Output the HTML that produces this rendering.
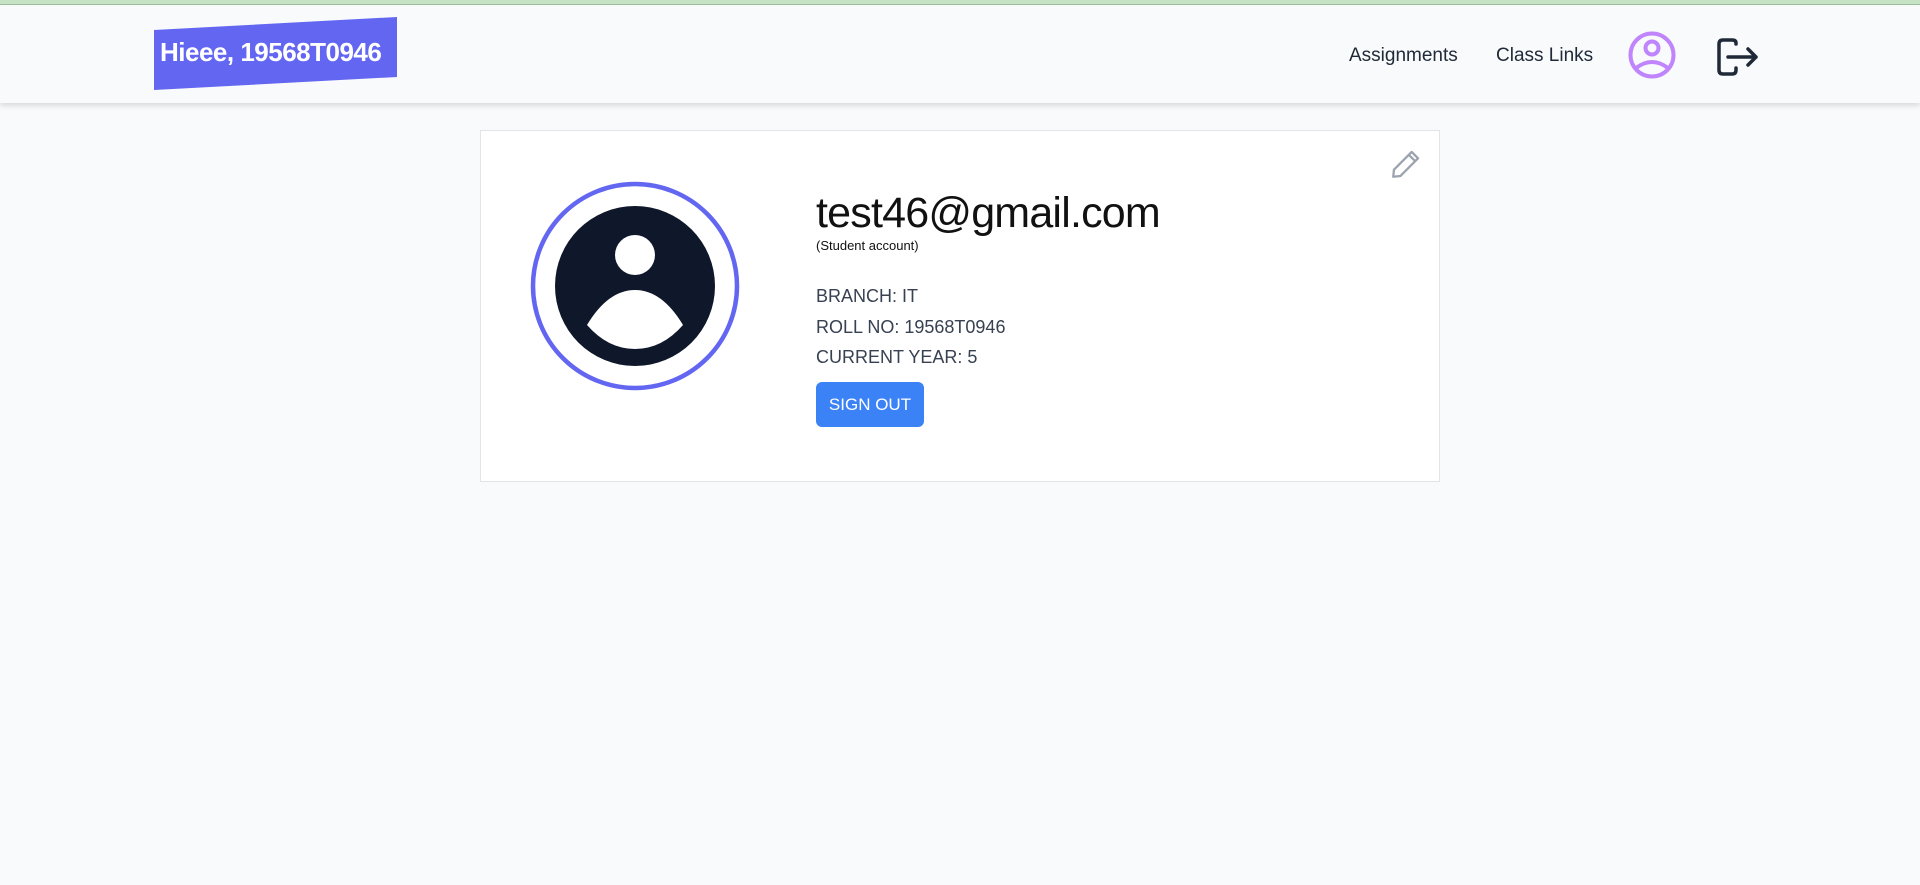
<!DOCTYPE html>
<html><head><meta charset="utf-8"><style>
*{box-sizing:border-box;margin:0;padding:0}
body{width:1920px;height:885px;background:#f8fafc;font-family:"Liberation Sans",sans-serif;position:relative;overflow:hidden;color:#1f2937}
.top{position:absolute;left:0;top:0;width:1920px;height:5px;background:#c6e3c6;border-bottom:1px solid #9cbf9c}
.hdr{position:absolute;left:0;top:5px;width:1920px;height:98px;background:#f8fafc;box-shadow:0 3px 5px rgba(0,0,0,.12)}
.logo{position:absolute;left:154px;top:12px;width:243px;height:73px;background:#6366f1;clip-path:polygon(0 13px,100% 0,100% 60px,0 73px)}
.logo span{position:absolute;left:6px;top:20px;color:#fff;font-weight:bold;font-size:26px;letter-spacing:-0.5px}
.nav{position:absolute;font-size:19px;color:#1f2937}
.card{position:absolute;left:480px;top:130px;width:960px;height:352px;background:#fff;border:1px solid #e2e4e8}
.t{position:absolute;left:335px;white-space:nowrap}
</style></head><body>
<div class="top"></div>
<div class="hdr">
<div class="logo"><span>Hieee, 19568T0946</span></div>
<div class="nav" style="left:1349px;top:40px">Assignments</div>
<div class="nav" style="left:1496px;top:40px">Class Links</div>
<svg style="position:absolute;left:1627px;top:25px" width="50" height="50" viewBox="0 0 50 50"><circle cx="25" cy="25" r="21.5" fill="none" stroke="#c084fc" stroke-width="4"/><circle cx="25" cy="18" r="6.5" fill="none" stroke="#c084fc" stroke-width="4"/><path d="M9 38 Q25 26 41 38" fill="none" stroke="#c084fc" stroke-width="4"/></svg>
<svg style="position:absolute;left:1716px;top:33px" width="44" height="40" viewBox="0 0 44 40"><path d="M20 6 V5 Q20 2 16 2 H7 Q3 2 3 6 V32 Q3 36 7 36 H16 Q20 36 20 32 V30" fill="none" stroke="#1f2937" stroke-width="3.5" stroke-linecap="round"/><path d="M12 19 H40 M32 11 L40 19 L32 27" fill="none" stroke="#1f2937" stroke-width="3.5" stroke-linecap="round" stroke-linejoin="round"/></svg>
</div>
<div class="card">
<svg style="position:absolute;left:49px;top:50px" width="210" height="210" viewBox="0 0 210 210"><circle cx="105" cy="105" r="102" fill="none" stroke="#6366f1" stroke-width="4.5"/><circle cx="105" cy="105" r="80" fill="#0f172a"/><circle cx="105" cy="74" r="20" fill="#fff"/><path d="M57 144 Q78 109 105 109 Q132 109 153 144 Q132 168 105 168 Q78 168 57 144Z" fill="#fff"/></svg>
<svg style="position:absolute;left:908px;top:16px" width="34" height="34" viewBox="0 0 24 24"><path d="M16 3.5 L20.5 8 L8 20.5 L3 21 L3.5 16 Z M14 5.5 L18.5 10" fill="none" stroke="#9ca3af" stroke-width="1.6" stroke-linejoin="round"/></svg>
<div class="t" style="top:58px;font-size:43px;font-weight:300;color:#111;letter-spacing:-0.8px">test46@gmail.com</div>
<div class="t" style="top:107px;font-size:13px;color:#111">(Student account)</div>
<div class="t" style="top:155px;font-size:18px;color:#374151">BRANCH: IT</div>
<div class="t" style="top:186px;font-size:18px;color:#374151">ROLL NO: 19568T0946</div>
<div class="t" style="top:216px;font-size:18px;color:#374151">CURRENT YEAR: 5</div>
<div class="t" style="top:251px;width:108px;height:45px;background:#3b82f6;border-radius:6px;color:#fff;font-size:17px;line-height:45px;text-align:center">SIGN OUT</div>
</div>
</body></html>
